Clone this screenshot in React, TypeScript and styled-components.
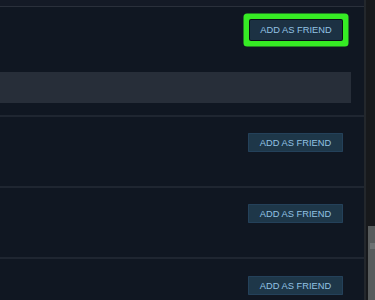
import styled, { createGlobalStyle } from 'styled-components'

const GlobalStyle = createGlobalStyle`
  html, body {
    margin: 0;
    padding: 0;
    background: #101722;
    overflow: hidden;
  }
  * { box-sizing: border-box; }
`

const Page = styled.div`
  display: flex;
  width: 375px;
  height: 300px;
  overflow: hidden;
  font-family: "Liberation Sans", Arial, sans-serif;
`

const Main = styled.div`
  flex: 1;
  display: flex;
  flex-direction: column;
  background: #101722;
`

const TopStrip = styled.div`
  height: 7px;
  flex-shrink: 0;
  background: #141a26;
  border-bottom: 1px solid #2a303b;
`

const Row = styled.div<{ $top: number; $height: number }>`
  flex-shrink: 0;
  height: ${p => p.$height}px;
  padding-top: ${p => p.$top}px;
  display: flex;
  flex-direction: column;
  border-bottom: 2px solid #1f2631;
`

const ButtonLine = styled.div`
  display: flex;
  justify-content: flex-end;
`

const FriendButton = styled.div<{ $highlight?: boolean }>`
  width: ${p => (p.$highlight ? 92 : 95)}px;
  height: ${p => (p.$highlight ? 20 : 19)}px;
  margin-right: ${p => (p.$highlight ? 22 : 21)}px;
  display: flex;
  align-items: center;
  justify-content: center;
  background: ${p => (p.$highlight ? '#1c3143' : '#1e3749')};
  color: #93c3e4;
  font-size: 9.3px;
  border-radius: 1px;
  box-shadow: ${p =>
    p.$highlight
      ? '0 0 0 1px #0b1018, 0 0 0 6.5px #36ec24'
      : 'inset 0 0 0 1px #24415a'};
`

const GrayBar = styled.div`
  margin-top: 32px;
  height: 31px;
  width: 351px;
  background: #272e39;
`

const Scrollbar = styled.div`
  width: 11px;
  flex-shrink: 0;
  background: #17191c;
  border-left: 2px solid #23272c;
  display: flex;
  flex-direction: column;
`

const Thumb = styled.div`
  margin-top: 226px;
  margin-left: 2px;
  flex: 1;
  background: #575b5c;
  position: relative;

  &::after {
    content: '';
    position: absolute;
    top: 17px;
    left: 2px;
    width: 5px;
    height: 6px;
    background: #6d7172;
  }
`

export default function App() {
  return (
    <Page>
      <GlobalStyle />
      <Main>
        <TopStrip />
        <Row $top={13} $height={110}>
          <ButtonLine>
            <FriendButton $highlight>ADD AS FRIEND</FriendButton>
          </ButtonLine>
          <GrayBar />
        </Row>
        <Row $top={16} $height={71}>
          <ButtonLine>
            <FriendButton>ADD AS FRIEND</FriendButton>
          </ButtonLine>
        </Row>
        <Row $top={16} $height={71}>
          <ButtonLine>
            <FriendButton>ADD AS FRIEND</FriendButton>
          </ButtonLine>
        </Row>
        <Row $top={17} $height={71}>
          <ButtonLine>
            <FriendButton>ADD AS FRIEND</FriendButton>
          </ButtonLine>
        </Row>
      </Main>
      <Scrollbar>
        <Thumb />
      </Scrollbar>
    </Page>
  )
}
